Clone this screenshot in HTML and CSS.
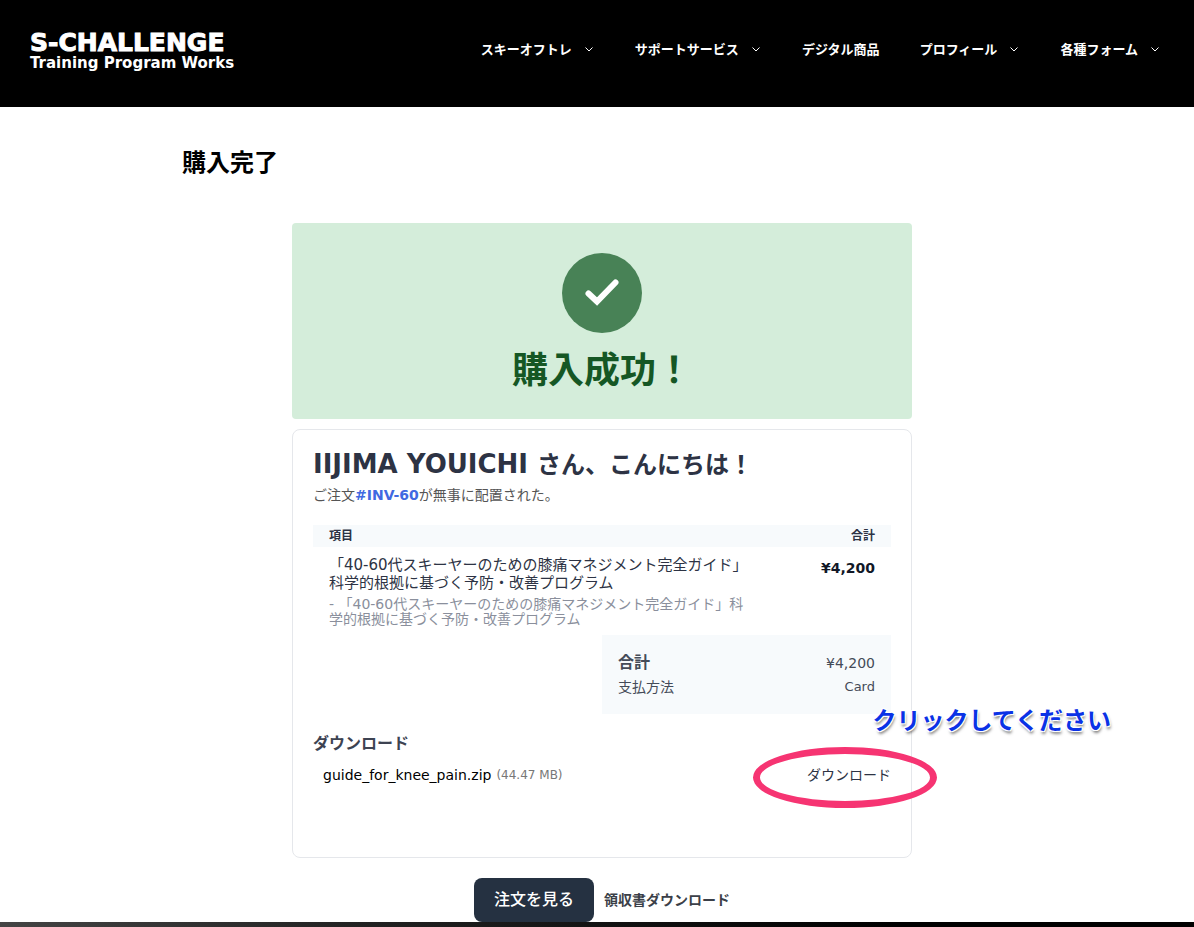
FILE: index.html
```html
<!DOCTYPE html>
<html lang="ja">
<head>
  <meta charset="UTF-8">
  <meta name="viewport" content="width=device-width, initial-scale=1.0">
  <title>購入完了</title>
  <link rel="stylesheet" href="styles.css">
</head>
<body>

  <header class="site-header">
    <a class="logo" href="#">
      <span class="logo-name">S-CHALLENGE</span>
      <span class="logo-tagline">Training Program Works</span>
    </a>
    <nav class="site-nav">
      <a href="#">スキーオフトレ <svg class="chevron" viewBox="0 0 12 12"><path d="M2.5 4.5 6 8l3.5-3.5"/></svg></a>
      <a href="#">サポートサービス <svg class="chevron" viewBox="0 0 12 12"><path d="M2.5 4.5 6 8l3.5-3.5"/></svg></a>
      <a href="#">デジタル商品</a>
      <a href="#">プロフィール <svg class="chevron" viewBox="0 0 12 12"><path d="M2.5 4.5 6 8l3.5-3.5"/></svg></a>
      <a href="#">各種フォーム <svg class="chevron" viewBox="0 0 12 12"><path d="M2.5 4.5 6 8l3.5-3.5"/></svg></a>
    </nav>
  </header>

  <main class="page">
    <h1>購入完了</h1>

    <div class="receipt">
      <div class="success">
        <svg class="success-icon" viewBox="0 0 80 80">
          <circle cx="40" cy="40" r="40"/>
          <path d="M26.5 40.5 35 48.5 53.5 29.5"/>
        </svg>
        <h2>購入成功！</h2>
      </div>

      <div class="card">
        <h3 class="greeting">IIJIMA YOUICHI <span>さん、こんにちは！</span></h3>
        <p class="order-note">ご注文<a href="#">#INV-60</a>が無事に配置された。</p>

        <table class="items">
          <thead>
            <tr>
              <th>項目</th>
              <th class="amount">合計</th>
            </tr>
          </thead>
          <tbody>
            <tr>
              <td>
                <p class="item-name">「40-60代スキーヤーのための膝痛マネジメント完全ガイド」科学的根拠に基づく予防・改善プログラム</p>
                <p class="item-variant">- 「40-60代スキーヤーのための膝痛マネジメント完全ガイド」科学的根拠に基づく予防・改善プログラム</p>
              </td>
              <td class="amount price">¥4,200</td>
            </tr>
          </tbody>
        </table>

        <dl class="totals">
          <div class="totals-row">
            <dt class="total-label">合計</dt>
            <dd>¥4,200</dd>
          </div>
          <div class="totals-row">
            <dt>支払方法</dt>
            <dd class="method">Card</dd>
          </div>
        </dl>

        <h4 class="downloads-title">ダウンロード</h4>
        <div class="download-row">
          <span class="file-name">guide_for_knee_pain.zip</span>
          <span class="file-size">(44.47 MB)</span>
          <a class="download-link" href="#">ダウンロード</a>
          <!-- click hint -->
          <span class="hint-ring"></span>
          <span class="hint-text">クリックしてください</span>
        </div>
      </div>

      <div class="actions">
        <button class="view-order" type="button">注文を見る</button>
        <a href="#">領収書ダウンロード</a>
      </div>
    </div>
  </main>

  <footer class="site-footer"></footer>

</body>
</html>
```
FILE: styles.css
```css
* {
  box-sizing: border-box;
}

body {
  margin: 0;
  font-family: "DejaVu Sans", "Noto Sans CJK JP", sans-serif;
  font-size: 14px;
  line-height: 20px;
  color: #2d3344;
  background-color: #fff;
}

h1, h2, h3, h4, p, dl, dd {
  margin: 0;
}

a {
  color: inherit;
  text-decoration: none;
}

/* Header */
.site-header {
  display: flex;
  justify-content: space-between;
  align-items: center;
  min-height: 107px;
  padding: 0 33px 10px 30px;
  background-color: #000;
  color: #fff;
}

.logo {
  display: flex;
  flex-direction: column;
  padding-top: 4px;
  font-weight: bold;
  white-space: nowrap;
}

.logo-name {
  font-size: 25px;
  line-height: 24px;
  -webkit-text-stroke: 1px #fff;
}

.logo-tagline {
  font-size: 15px;
  line-height: 16px;
}

.site-nav {
  display: flex;
  gap: 40px;
  font-family: "Noto Sans CJK JP", sans-serif;
  font-size: 13px;
  font-weight: bold;
}

.site-nav a {
  display: flex;
  align-items: center;
  gap: 11px;
  white-space: nowrap;
}

.chevron {
  width: 12px;
  height: 12px;
  fill: none;
  stroke: #fff;
  stroke-width: 1;
}

/* Page */
.page {
  max-width: 850px;
  margin: 0 auto;
  padding: 36px 0 0 10px;
}

h1 {
  font-size: 24px;
  line-height: 40px;
  color: #000;
}

.receipt {
  max-width: 620px;
  margin: 40px auto 0;
}

.success {
  padding: 30px 30px 28px;
  text-align: center;
  background-color: #d4edda;
  border-radius: 4px;
}

.success-icon {
  display: block;
  width: 80px;
  height: 80px;
  margin: 0 auto 18px;
}

.success-icon circle {
  fill: #488256;
}

.success-icon path {
  fill: none;
  stroke: #fff;
  stroke-width: 6;
  stroke-linecap: round;
}

.success h2 {
  font-size: 36px;
  line-height: 40px;
  color: #155724;
}

.card {
  margin-top: 10px;
  padding: 18px 20px 72px;
  border: 1px solid #e5e7eb;
  border-radius: 8px;
}

.greeting {
  font-size: 26px;
  line-height: 32px;
}

.greeting span {
  font-size: 24px;
}

.order-note {
  margin-top: 4px;
  color: #555;
}

.order-note a {
  font-weight: bold;
  color: #4169e1;
}

/* Items table */
.items {
  width: 100%;
  margin-top: 20px;
  table-layout: fixed;
  border-collapse: collapse;
}

.items th {
  width: 76%;
  padding: 1px 0 1px 16px;
  font-size: 12px;
  text-align: left;
  background-color: #f7fafc;
}

.items td {
  padding: 9px 0 0 16px;
  vertical-align: top;
}

.items .amount {
  width: 24%;
  padding-right: 16px;
  text-align: right;
}

.items .price {
  padding-top: 11px;
  font-weight: bold;
  color: #111827;
}

.item-name {
  font-size: 15px;
  line-height: 18px;
}

.item-variant {
  margin-top: 5px;
  line-height: 15px;
  color: #8a8f9c;
}

.totals {
  width: 50%;
  margin: 8px 0 0 auto;
  padding: 16px 16px 15px;
  background-color: #f7fafc;
  color: #444b58;
}

.totals-row {
  display: flex;
  justify-content: space-between;
  line-height: 24px;
}

.total-label {
  font-size: 16px;
  font-weight: bold;
}

.method {
  font-size: 13px;
}

/* Downloads */
.downloads-title {
  margin-top: 20px;
  font-size: 16px;
  color: #3d4352;
}

.download-row {
  position: relative;
  display: flex;
  align-items: center;
  gap: 5px;
  margin-top: 11px;
  padding-left: 10px;
}

.file-name {
  color: #000;
}

.file-size {
  font-size: 12px;
  color: #777;
}

.download-link {
  margin-left: auto;
}

.hint-ring {
  position: absolute;
  top: -18px;
  right: -46px;
  width: 184px;
  height: 61px;
  border: 7px solid #f63472;
  border-radius: 50%;
  pointer-events: none;
}

.hint-text {
  position: absolute;
  top: -60px;
  right: -220px;
  font-size: 24px;
  font-weight: bold;
  line-height: 32px;
  white-space: nowrap;
  color: #0a32e6;
  text-shadow: 1px 1px 0 #fff, -1px -1px 0 #fff, 1px -1px 0 #fff, -1px 1px 0 #fff, 1px 3px 3px rgba(0, 0, 0, 0.5);
}

/* Actions */
.actions {
  display: flex;
  justify-content: center;
  align-items: center;
  gap: 10px;
  margin-top: 20px;
  font-weight: bold;
  color: #3b3f48;
}

.view-order {
  padding: 10px 20px;
  border: 0;
  border-radius: 8px;
  font-family: inherit;
  font-size: 16px;
  font-weight: 500;
  line-height: 24px;
  color: #fff;
  background-color: #253141;
}

.site-footer {
  height: 5px;
  background: linear-gradient(to right, #444, #222 30%, #000 75%);
}
```
